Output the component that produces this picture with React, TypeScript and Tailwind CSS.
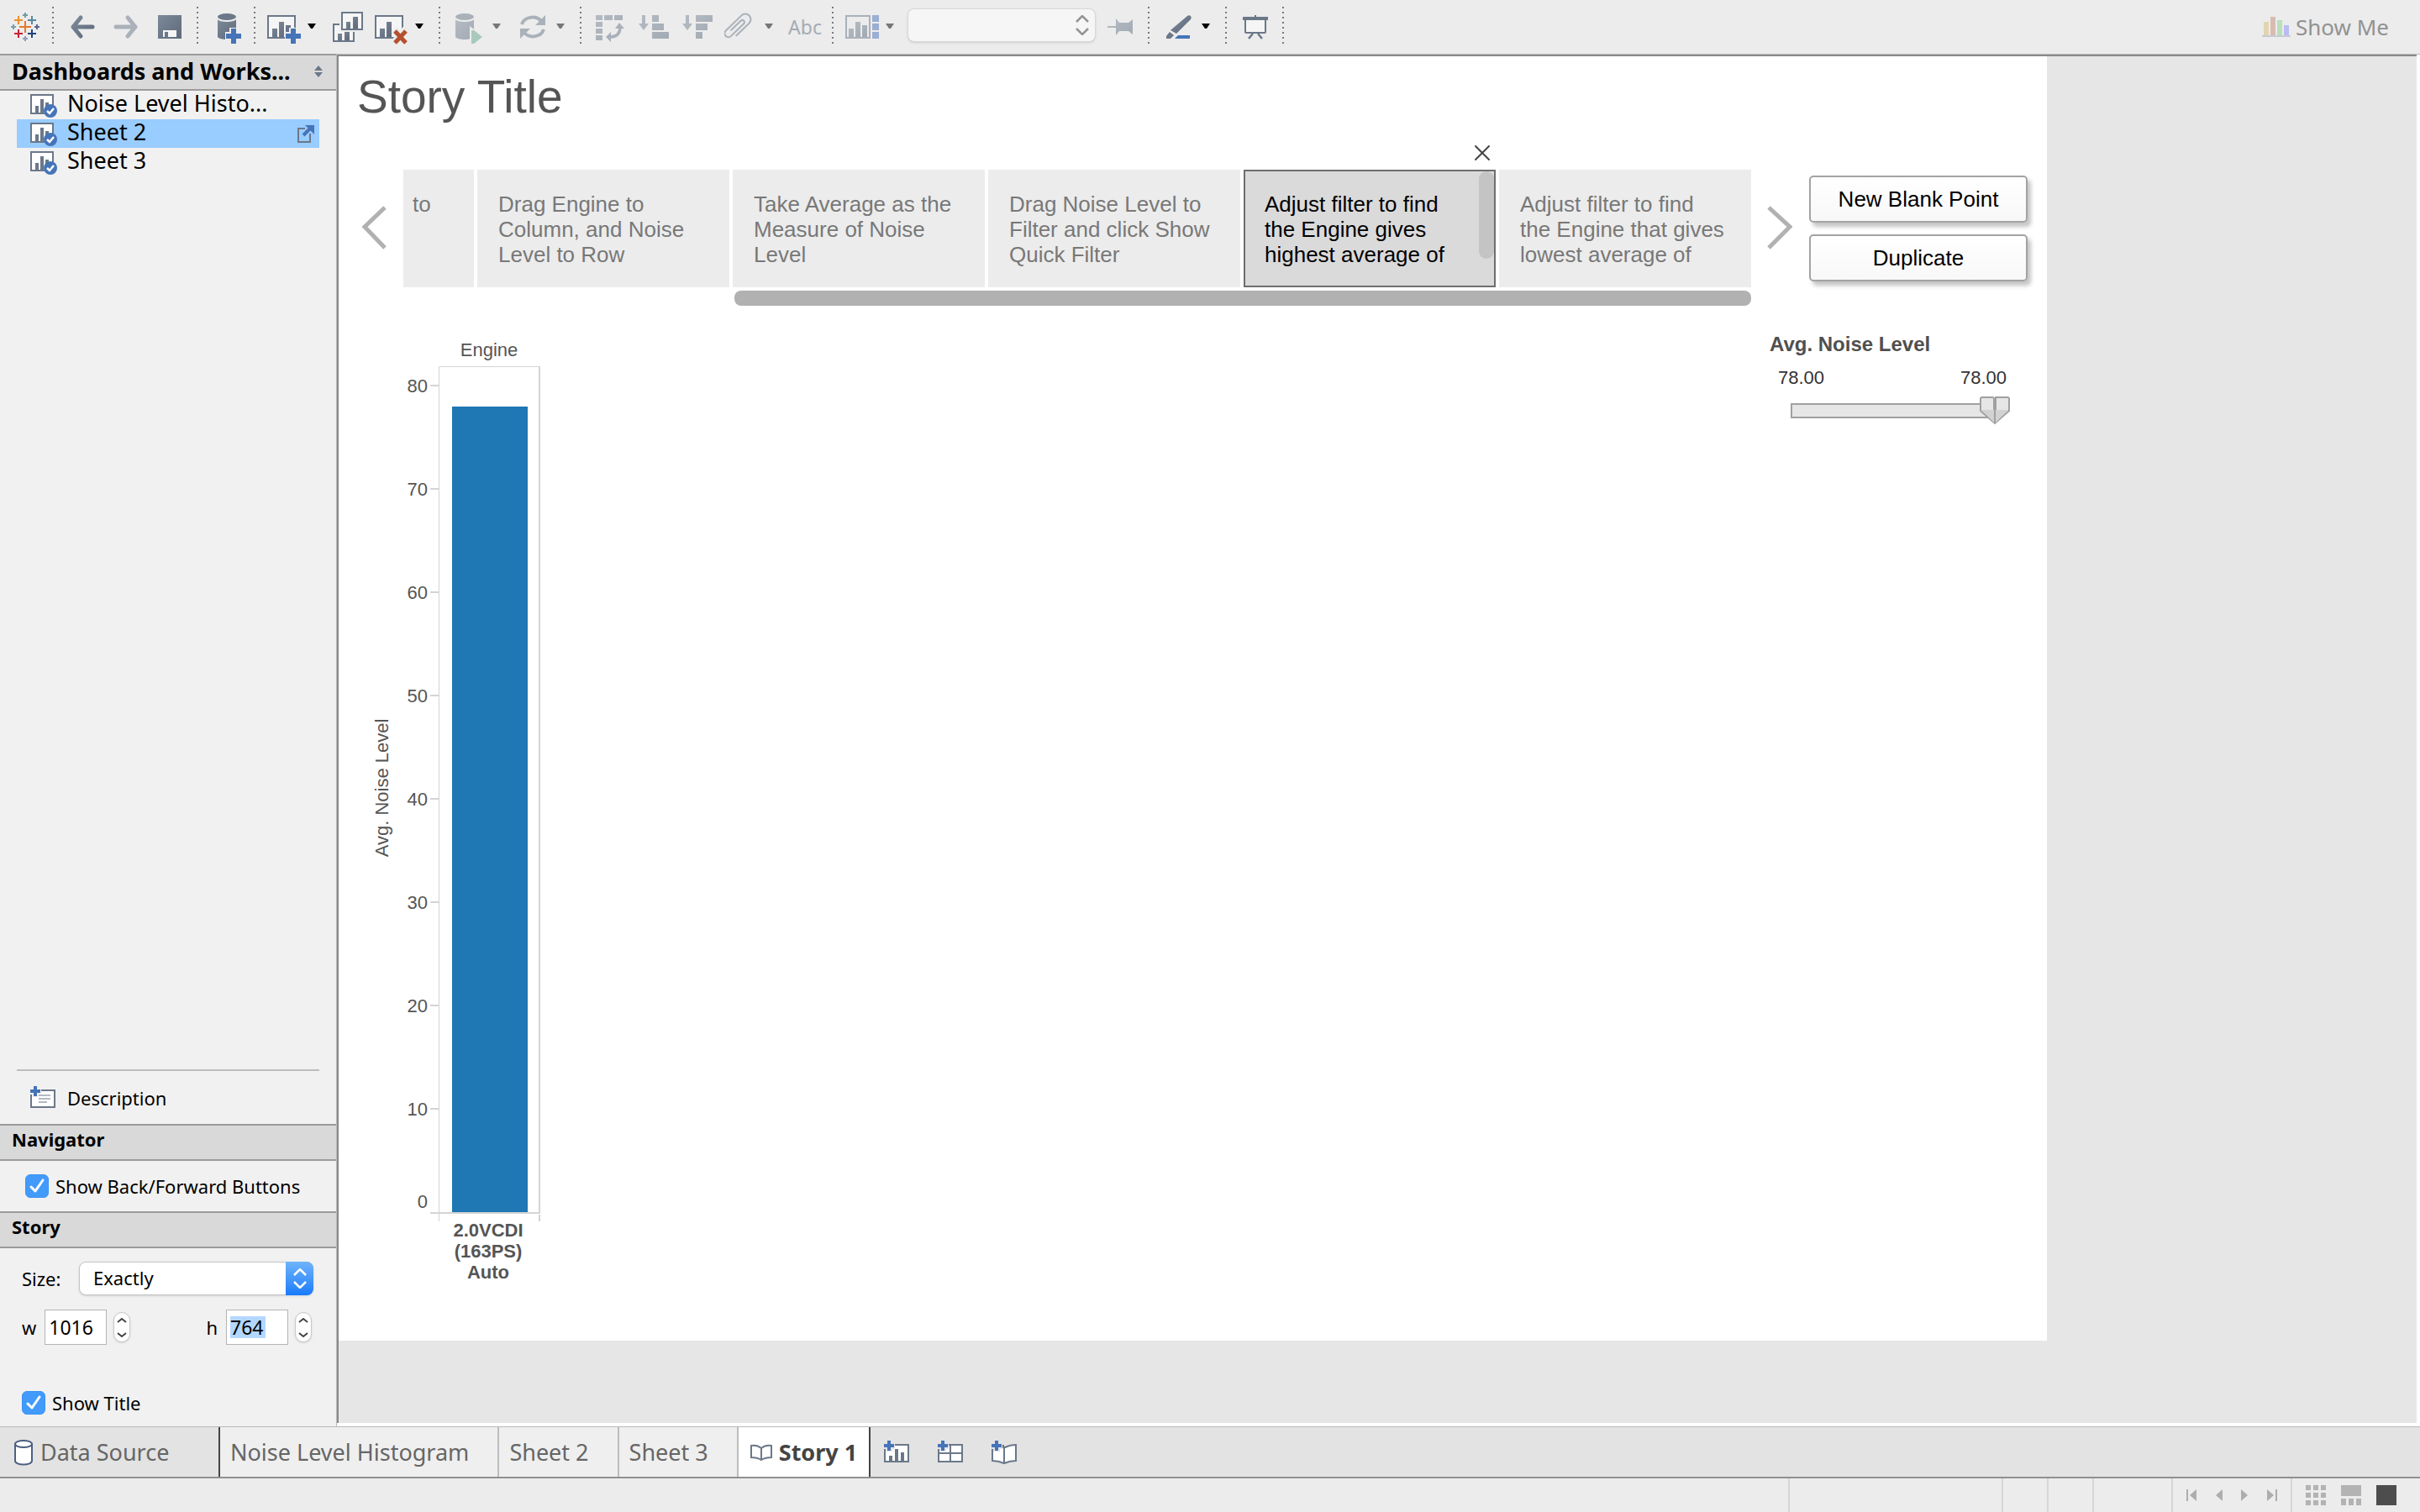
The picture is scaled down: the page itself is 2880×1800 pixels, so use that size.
import React, { useState } from "react";

const SLATE = "#6b7889";
const MUTED = "#aab1ba";
const BLUE = "#4674b8";

function Gradients() {
  return (
    <svg width="0" height="0" className="absolute" aria-hidden="true">
      <defs>
        <linearGradient id="slate" x1="0" y1="0" x2="1" y2="1">
          <stop offset="0" stopColor="#7d8a98" />
          <stop offset="1" stopColor="#5d697c" />
        </linearGradient>
        <linearGradient id="muted" x1="0" y1="0" x2="1" y2="1">
          <stop offset="0" stopColor="#b5bbc2" />
          <stop offset="1" stopColor="#a1aab4" />
        </linearGradient>
      </defs>
    </svg>
  );
}

type ToolProps = {
  label: string;
  w: number;
  className?: string;
  disabled?: boolean;
  children: React.ReactNode;
};

function Tool({ label, w, className = "", disabled, children }: ToolProps) {
  return (
    <button type="button" aria-label={label} disabled={disabled} className={`h-16 shrink-0 ${className}`}>
      <svg width={w} height="64" viewBox={`0 0 ${w} 64`} fill="none" className="block">
        {children}
      </svg>
    </button>
  );
}

function Caret({ label, className = "", muted }: { label: string; className?: string; muted?: boolean }) {
  return (
    <Tool label={label} w={10} className={className} disabled={muted}>
      <path d="M0 28H10L6 34H4Z" fill={muted ? "#777" : "#000"} />
    </Tool>
  );
}

function Sep({ className = "" }: { className?: string }) {
  return (
    <svg width="2" height="64" viewBox="0 0 2 64" className={`shrink-0 ${className}`} aria-hidden="true">
      <path d="M1 8V53" stroke="#7a7a7a" strokeWidth="2" strokeDasharray="2 4" />
    </svg>
  );
}

function Plus({ x, y, r, t, halo = "#ececec" }: { x: number; y: number; r: number; t: number; halo?: string }) {
  return (
    <g>
      <path d={`M${x - r - 1} ${y}H${x + r + 1}M${x} ${y - r - 1}V${y + r + 1}`} stroke={halo} strokeWidth={t + 4} />
      <path d={`M${x - r} ${y}H${x + r}M${x} ${y - r}V${y + r}`} stroke={BLUE} strokeWidth={t} />
    </g>
  );
}

function Logo() {
  const p = (x: number, y: number, r: number, c: string, w: number) => (
    <path d={`M${x - r} ${y}H${x + r}M${x} ${y - r}V${y + r}`} stroke={c} strokeWidth={w} />
  );
  return (
    <>
      {p(18, 32, 7, "#e8762c", 2)}
      {p(18, 18, 3, "#7199a6", 2)}
      {p(18, 46, 3, "#8f9bb8", 2)}
      {p(4, 32, 3, "#7aa0ab", 2)}
      {p(32, 32, 3, "#5c6692", 2)}
      {p(10, 24, 5, "#eb912c", 2)}
      {p(26, 24, 5, "#59879b", 2)}
      {p(10, 40, 5, "#c72035", 2)}
      {p(26, 40, 5, "#1f457e", 2)}
    </>
  );
}

function Toolbar() {
  return (
    <header className="flex h-16 items-center bg-[#ececec]">
      <Tool label="Start page" w={36} className="ml-3"><Logo /></Tool>
      <Sep className="ml-3.5" />
      <Tool label="Undo" w={32} className="ml-[19px]">
        <path d="M13 21L4 32L13 43M4 32H27" stroke="url(#slate)" strokeWidth="5" strokeLinecap="round" strokeLinejoin="round" />
      </Tool>
      <Tool label="Redo" w={32} className="ml-5" disabled>
        <path d="M17 21L26 32L17 43M26 32H3" stroke={MUTED} strokeWidth="5" strokeLinecap="round" strokeLinejoin="round" />
      </Tool>
      <Tool label="Save" w={28} className="ml-[21px]">
        <rect y="18" width="28" height="28" fill="url(#slate)" />
        <rect x="6" y="36" width="16" height="8" fill="#f4f4f4" />
        <rect x="8" y="38" width="4" height="6" fill={SLATE} />
      </Tool>
      <Sep className="ml-[18px]" />
      <Tool label="New data source" w={30} className="ml-[23px]">
        <path d="M0 23C2 27 20 27 22 23V44C20 48 2 48 0 44Z" fill="url(#slate)" />
        <ellipse cx="11" cy="20" rx="11" ry="4" fill={SLATE} />
        <Plus x={19} y={43} r={9} t={6} />
      </Tool>
      <Sep className="ml-[13px]" />
      <Tool label="New worksheet" w={40} className="ml-3.5">
        <rect x="1" y="19" width="32" height="26" fill="#f5f5f5" stroke={SLATE} strokeWidth="2" />
        <path d="M6 34h6v10H6zM14 26h6v18h-6zM22 30h6v14h-6z" fill="url(#slate)" />
        <Plus x={31} y={43} r={9} t={6} />
      </Tool>
      <Caret label="New worksheet options" className="ml-2" />
      <Tool label="Duplicate" w={36} className="ml-5">
        <rect x="1" y="29" width="24" height="20" fill="#f5f5f5" stroke={SLATE} strokeWidth="2" />
        <path d="M6 40h5v8H6zM14 38h6v10h-6z" fill="url(#slate)" />
        <rect x="8" y="13" width="28" height="25" fill="#ececec" />
        <rect x="11" y="15" width="24" height="20" fill="#f5f5f5" stroke={SLATE} strokeWidth="2" />
        <path d="M16 26h5v8h-5zM24 20h6v14h-6z" fill="url(#slate)" />
      </Tool>
      <Tool label="Clear sheet" w={40} className="ml-3.5">
        <rect x="1" y="19" width="32" height="26" fill="#f5f5f5" stroke={SLATE} strokeWidth="2" />
        <path d="M6 34h6v10H6zM14 26h6v18h-6z" fill="url(#slate)" />
        <path d="M23 35L37 51M37 35L23 51" stroke="#ececec" strokeWidth="9" />
        <path d="M24 37L37 51M37 37L24 51" stroke="#b5502f" strokeWidth="5" />
      </Tool>
      <Caret label="Clear sheet options" className="ml-2" />
      <Sep className="ml-[18px]" />
      <Tool label="Run auto updates" w={32} className="ml-[18px]" disabled>
        <path d="M0 23C2 27 20 27 22 23V44C20 48 2 48 0 44Z" fill="url(#muted)" />
        <ellipse cx="11" cy="20" rx="11" ry="4" fill={MUTED} />
        <path d="M17 31L34 44L17 54Z" fill="#ececec" />
        <path d="M19 36H22L32 44L22 52H19Z" fill="#a9c9bd" />
      </Tool>
      <Caret label="Auto update options" className="ml-3" muted />
      <Tool label="Refresh" w={32} className="ml-[22px]" disabled>
        <g stroke={MUTED} strokeWidth="4">
          <path d="M3 29A13 11 0 0 1 26 25" />
          <path d="M29 35A13 11 0 0 1 6 39" />
        </g>
        <path d="M31 18V30H19Z M1 46V34H13Z" fill={MUTED} />
      </Tool>
      <Caret label="Refresh options" className="ml-3" muted />
      <Sep className="ml-[18px]" />
      <Tool label="Swap rows and columns" w={34} className="ml-[17px]" disabled>
        <path d="M0 18h8v6H0zM10 18h10v6H10zM22 18h10v6H22zM0 26h8v6H0zM0 34h8v6H0zM0 42h8v6H0z" fill="url(#muted)" />
        <path d="M29 32C29 40 25 44 17 44" stroke={MUTED} strokeWidth="3.5" />
        <path d="M28 27L34 34H23ZM12 44L18 38V50Z" fill={MUTED} />
      </Tool>
      <Tool label="Sort ascending" w={36} className="ml-[17px]" disabled>
        <path d="M4 18h4v10h4L6 36L0 28h4zM16 18h8v8h-8zM16 28h14v8H16zM16 38h20v8H16z" fill="url(#muted)" />
      </Tool>
      <Tool label="Sort descending" w={36} className="ml-4" disabled>
        <path d="M4 18h4v10h4L6 36L0 28h4zM16 18h20v8H16zM16 28h14v8H16zM16 38h8v8h-8z" fill="url(#muted)" />
      </Tool>
      <Tool label="Group members" w={34} className="ml-3.5" disabled>
        <path
          transform="translate(16 31) rotate(46)"
          d="M7 9V-12a6.500 6.500 0 0 0-13 0V14a4.500 4.500 0 0 0 9 0V-7a2.500 2.500 0 0 0-5 0V9"
          stroke={MUTED}
          strokeWidth="2"
          strokeLinecap="round"
        />
      </Tool>
      <Caret label="Group options" className="ml-3.5" muted />
      <button type="button" disabled className="ml-[18px] w-10 shrink-0 text-center text-[23px] leading-8 text-[#a4abb4]">Abc</button>
      <Sep className="ml-3" />
      <Tool label="Show cards" w={40} className="ml-3.5" disabled>
        <rect x="1" y="19" width="28" height="26" stroke={MUTED} strokeWidth="2" />
        <path d="M4 34h6v10H4zM12 26h6v18h-6zM20 30h6v14h-6z" fill="url(#muted)" />
        <path d="M32 18h8v8h-8zM32 28h8v8h-8zM32 38h8v8h-8z" fill="#9bafd3" />
      </Tool>
      <Caret label="Card options" className="ml-2" muted />
      <div className="relative ml-4 w-56 shrink-0 pb-1">
        <select aria-label="Fit" disabled className="block h-10 w-full appearance-none rounded-lg border border-[#d8d8d8] bg-[#f6f6f6] shadow-sm">
          <option></option>
        </select>
        <svg width="16" height="24" viewBox="0 0 16 24" fill="none" className="pointer-events-none absolute top-2 right-2">
          <path d="M1 8L8 1L15 8M1 16L8 23L15 16" stroke="#949494" strokeWidth="2.500" />
        </svg>
      </div>
      <Tool label="Fix axes" w={30} className="ml-3.5" disabled>
        <path d="M0 31H10V22L14 27H25L30 23V41L25 37H14L10 42V33H0Z" fill="url(#muted)" />
      </Tool>
      <Sep className="ml-[18px]" />
      <Tool label="Highlight" w={30} className="ml-5">
        <path d="M25 19C28 17 31 20 29 23L12 40L5 36Z" fill="url(#slate)" />
        <path d="M4 38L9 42L5 46H0V43Z" fill={SLATE} />
        <path d="M14 42H28V46H10Z" fill={BLUE} />
      </Tool>
      <Caret label="Highlight options" className="ml-3" />
      <Sep className="ml-[18px]" />
      <Tool label="Presentation mode" w={30} className="ml-[19px]">
        <rect x="3" y="23" width="24" height="16" rx="1" fill="#f5f5f5" stroke={SLATE} strokeWidth="2" />
        <path d="M0 20H30V24H0ZM14 18h2v3h-2z" fill={SLATE} />
        <path d="M12 40L7 46M18 40L23 46" stroke={SLATE} strokeWidth="2.500" />
      </Tool>
      <Sep className="ml-[17px]" />
      <button type="button" disabled className="mr-[37px] ml-auto flex items-center gap-1.5 text-[26px] leading-8 text-[#929292]">
        <svg width="34" height="64" viewBox="0 0 34 64" aria-hidden="true">
          <path d="M2 26h6v16H2z" fill="#e2d5b0" />
          <path d="M10 20h6v22h-6z" fill="#d9bcb1" />
          <path d="M18 24h6v18h-6z" fill="#b8e0ba" />
          <path d="M26 30h6v12h-6z" fill="#b9bdf2" />
          <path d="M0 42h34v2H0z" fill="#c6cad2" />
        </svg>
        Show Me
      </button>
    </header>
  );
}

function SectionHeader({ children, large }: { children: React.ReactNode; large?: boolean }) {
  return (
    <h2
      className={`flex h-11 items-center justify-between border-y-2 border-[#9b9b9b] bg-[#d9d9d9] pl-3.5 font-bold text-black ${
        large ? "pb-0.5 text-[27px] leading-8" : "pb-2 text-[22px] leading-8"
      }`}
    >
      {children}
    </h2>
  );
}

function SheetIcon() {
  return (
    <svg width="34" height="34" viewBox="0 0 34 34" className="shrink-0" aria-hidden="true">
      <rect x="1" y="5" width="26" height="22" fill="#fff" stroke={SLATE} strokeWidth="2" />
      <path d="M6 18h4v9H6zM12 10h4v17h-4zM18 14h4v6h-4z" fill={SLATE} />
      <circle cx="24" cy="24" r="8" fill={BLUE} />
      <path d="M20 24L23 27L28 21" stroke="#fff" strokeWidth="2.500" fill="none" />
    </svg>
  );
}

function SheetList() {
  const sheets = ["Noise Level Histo...", "Sheet 2", "Sheet 3"];
  return (
    <ul className="px-5">
      {sheets.map((name, i) => (
        <li key={name} className={`flex h-[34px] items-center ${i === 1 ? "bg-[#99ccff]" : ""}`}>
          <button type="button" className="flex flex-1 items-center gap-2.5 pl-4 text-[27px] leading-[30px] text-black">
            <SheetIcon />
            <span className="pb-1">{name}</span>
          </button>
          {i === 1 && (
            <a href="#sheet-2" aria-label="Go to Sheet 2" className="mr-1.5">
              <svg width="20" height="24" viewBox="0 0 20 24" fill="none">
                <path d="M9 6H1V22H15V12" stroke={SLATE} strokeWidth="2" />
                <path d="M7 14L16 5" stroke={BLUE} strokeWidth="4" />
                <path d="M9 2H20V13Z" fill={BLUE} />
              </svg>
            </a>
          )}
        </li>
      ))}
    </ul>
  );
}

function Check({ label, className = "" }: { label: string; className?: string }) {
  const [on, setOn] = useState(true);
  return (
    <label className={`flex items-center gap-2 text-[22px] leading-7 text-black ${className}`}>
      <span className="relative block size-7 shrink-0">
        <input
          type="checkbox"
          checked={on}
          onChange={() => setOn(!on)}
          className="block size-7 appearance-none rounded-md border border-[#b5b5b5] bg-white checked:border-[#3a92f5] checked:bg-[#429bfa]"
        />
        {on && (
          <svg width="28" height="28" viewBox="0 0 28 28" fill="none" className="pointer-events-none absolute inset-0">
            <path d="M7 15L12 20L21 7" stroke="#fff" strokeWidth="3" strokeLinecap="round" strokeLinejoin="round" />
          </svg>
        )}
      </span>
      {label}
    </label>
  );
}

function NumberField({ id, label, value, selected }: { id: string; label: string; value: string; selected?: boolean }) {
  return (
    <div className="flex items-center">
      <label htmlFor={id} className="mr-2.5 text-[22px] leading-7 text-black">{label}</label>
      <input
        id={id}
        type="text"
        defaultValue={value}
        className={`h-[42px] w-[74px] border border-[#b4b4b4] bg-white px-1 text-[23px] leading-7 text-black ${
          selected ? "bg-[linear-gradient(#b3d7ff,#b3d7ff)] bg-[length:42px_26px] bg-[position:4px_center] bg-no-repeat" : ""
        }`}
      />
      <span className="ml-2 flex h-9 w-5 flex-col rounded-full border border-[#c9c9c9] bg-white shadow-sm">
        <button type="button" aria-label={`Increase ${label}`} className="flex flex-1 items-center justify-center">
          <svg width="12" height="6" viewBox="0 0 12 6" fill="none"><path d="M1 5L6 1L11 5" stroke="#444" strokeWidth="2" /></svg>
        </button>
        <button type="button" aria-label={`Decrease ${label}`} className="flex flex-1 items-center justify-center">
          <svg width="12" height="6" viewBox="0 0 12 6" fill="none"><path d="M1 1L6 5L11 1" stroke="#444" strokeWidth="2" /></svg>
        </button>
      </span>
    </div>
  );
}

function Sidebar() {
  return (
    <aside className="flex w-[400px] shrink-0 flex-col bg-[#f1f1f1]">
      <SectionHeader large>
        <span>Dashboards and Works...</span>
        <svg width="10" height="14" viewBox="0 0 10 14" className="mr-4" aria-hidden="true">
          <path d="M0 6L5 0L10 6ZM0 8L5 14L10 8Z" fill={SLATE} />
        </svg>
      </SectionHeader>
      <SheetList />
      <div className="mx-5 mt-auto border-t-2 border-[#bdbdbd]" />
      <button type="button" className="flex h-[63px] items-center gap-3.5 pl-9 text-[22px] leading-8 text-black">
        <svg width="30" height="28" viewBox="0 0 30 28" fill="none" aria-hidden="true">
          <rect x="1" y="5" width="28" height="20" fill="#fff" stroke={SLATE} strokeWidth="2" />
          <path d="M10 11H24M10 15H24M10 19H20" stroke="#b4b9c2" strokeWidth="2" />
          <Plus x={6} y={6} r={6} t={4} halo="#f1f1f1" />
        </svg>
        Description
      </button>
      <SectionHeader>Navigator</SectionHeader>
      <div className="flex h-[60px] items-center pl-[30px]">
        <Check label="Show Back/Forward Buttons" />
      </div>
      <SectionHeader>Story</SectionHeader>
      <div className="pt-4 pr-[27px] pb-[14px] pl-[26px]">
        <div className="flex items-center justify-between">
          <label htmlFor="size" className="text-[22px] leading-8 text-black">Size:</label>
          <div className="relative w-[279px]">
            <select id="size" defaultValue="Exactly" className="block h-10 w-full appearance-none rounded-lg border border-[#c4c4c4] bg-white pb-0.5 pl-4 text-[22px] text-black shadow-sm">
              <option>Exactly</option>
              <option>Automatic</option>
              <option>Range</option>
            </select>
            <span className="pointer-events-none absolute inset-y-0 right-0 flex w-[33px] items-center justify-center rounded-r-lg bg-linear-to-b from-[#6db3f9] to-[#147bfc]">
              <svg width="16" height="24" viewBox="0 0 16 24" fill="none">
                <path d="M1 8L8 1L15 8M1 16L8 23L15 16" stroke="#fff" strokeWidth="2.500" />
              </svg>
            </span>
          </div>
        </div>
        <div className="mt-[17px] flex items-center justify-between pr-0.5">
          <NumberField id="width" label="w" value="1016" />
          <NumberField id="height" label="h" value="764" selected />
        </div>
        <Check label="Show Title" className="mt-[55px]" />
      </div>
    </aside>
  );
}

const points = [
  "Drag Engine to Column, and Noise Level to Row",
  "Take Average as the Measure of Noise Level",
  "Drag Noise Level to Filter and click Show Quick Filter",
  "Adjust filter to find the Engine gives highest average of",
  "Adjust filter to find the Engine that gives lowest average of",
];

function StoryNavigator() {
  return (
    <nav className="flex items-start pr-[23px] pl-[27px]" aria-label="Story points">
      <button type="button" aria-label="Previous point" className="mt-[65px] shrink-0">
        <svg width="30" height="70" viewBox="0 0 30 70" fill="none">
          <path d="M28 12L4 35L28 60" stroke="#b1b1b1" strokeWidth="5" />
        </svg>
      </button>
      <div className="ml-5 min-w-0 flex-1">
        <div className="flex h-[172px] items-end gap-1 overflow-hidden">
          <button type="button" className="flex h-[140px] w-[84px] shrink-0 bg-[#ececec] pt-[26px] pl-[11px] text-left text-[26px] leading-[30px] text-[#787878]">to</button>
          {points.map((text, i) => {
            const active = i === 3;
            return (
              <div key={i} className="relative h-[140px] w-[300px] shrink-0">
                <button
                  type="button"
                  className={`flex size-full overflow-hidden border-2 pt-6 pr-7 pl-[23px] text-left text-[26px] leading-[30px] ${
                    active ? "border-[#6e6e6e] bg-[#dadada] text-black" : "border-[#ececec] bg-[#ececec] text-[#787878]"
                  }`}
                >
                  {text}
                </button>
                {active && (
                  <>
                    <span className="absolute top-0.5 right-0.5 h-26 w-[18px] rounded-full bg-[#c4c4c4]" />
                    <button type="button" aria-label="Delete point" className="absolute -top-[30px] right-1.5">
                      <svg width="20" height="20" viewBox="0 0 20 20" fill="none" className="block">
                        <path d="M2 2L18 18M18 2L2 18" stroke="#444" strokeWidth="2" strokeLinecap="round" />
                      </svg>
                    </button>
                  </>
                )}
              </div>
            );
          })}
        </div>
        <div className="mt-1 flex justify-end">
          <div className="h-[18px] w-[1210px] rounded-lg bg-[#b1b1b1]" />
        </div>
      </div>
      <button type="button" aria-label="Next point" className="mt-[65px] ml-[19px] shrink-0">
        <svg width="30" height="70" viewBox="0 0 30 70" fill="none">
          <path d="M2 12L27 35L2 60" stroke="#b1b1b1" strokeWidth="5" />
        </svg>
      </button>
      <div className="mt-[39px] ml-5 flex w-[260px] shrink-0 flex-col gap-3.5">
        {["New Blank Point", "Duplicate"].map((t) => (
          <button key={t} type="button" className="h-14 rounded-[5px] border-2 border-[#a3a3a3] bg-linear-to-b from-white to-[#f8f8f8] text-[26px] leading-8 text-black shadow-[4px_5px_5px_#c4c4c4]">
            {t}
          </button>
        ))}
      </div>
    </nav>
  );
}

function Chart() {
  const y = (v: number) => Math.round(1043 - v * 12.3);
  const ticks = [80, 70, 60, 50, 40, 30, 20, 10];
  return (
    <svg width="222" height="1140" viewBox="0 0 222 1140" fontFamily="Liberation Sans, Arial, sans-serif" fontSize="22" fill="#555" role="img" aria-label="Avg. Noise Level by Engine">
      <text x="159" y="24" textAnchor="middle">Engine</text>
      <g stroke="#d4d4d4" fill="none">
        <path d="M99.500 1054V36.500H218" strokeWidth="1" />
        <path d="M219 36V1043" strokeWidth="2" />
        <path d="M219 1046V1054" strokeWidth="2" />
        <path d="M89 1044H220" strokeWidth="2" />
        {ticks.map((t) => (
          <path key={t} d={`M89 ${y(t)}H99`} strokeWidth="2" />
        ))}
      </g>
      {ticks.map((t) => (
        <text key={t} x="86" y={y(t) + 8} textAnchor="end">{t}</text>
      ))}
      <text x="86" y="1038" textAnchor="end">0</text>
      <rect x="115" y={y(78)} width="90" height={1043 - y(78)} fill="#1f77b4" />
      <text transform="translate(39 538) rotate(-90)" textAnchor="middle">Avg. Noise Level</text>
      <g textAnchor="middle" fontWeight="bold">
        <text x="158" y="1072">2.0VCDI</text>
        <text x="158" y="1097">(163PS)</text>
        <text x="158" y="1122">Auto</text>
      </g>
    </svg>
  );
}

function RangeFilter() {
  return (
    <fieldset className="w-[308px] shrink-0 pr-5">
      <legend className="text-2xl leading-8 font-bold text-[#4f4f4f]">Avg. Noise Level</legend>
      <div className="mt-2 flex justify-between pr-1.5 pl-2.5 text-[22px] leading-8 text-[#333]">
        <span>78.00</span>
        <span>78.00</span>
      </div>
      <div className="relative mt-1.5 ml-[25px] h-9">
        <svg width="262" height="36" viewBox="0 0 262 36" fill="none" aria-hidden="true">
          <rect x="1" y="9" width="238" height="16" fill="#e6e6e6" stroke="#a0a0a0" strokeWidth="2" />
          <path d="M227 1H240Q242 1 242 3V31L226 17V3Q226 1 228 1Z" fill="#e6e6e6" stroke="#a0a0a0" strokeWidth="2" />
          <path d="M244 1H258Q260 1 260 3V17L244 31Z" fill="#e6e6e6" stroke="#a0a0a0" strokeWidth="2" />
          <path d="M227 16H242V31ZM244 16H259L244 31Z" fill="#d2d2d2" />
        </svg>
        <input type="range" aria-label="Minimum noise level" min={60} max={78} defaultValue={78} className="absolute inset-y-0 left-0 w-1/2 opacity-0" />
        <input type="range" aria-label="Maximum noise level" min={60} max={78} defaultValue={78} className="absolute inset-y-0 right-0 w-1/2 opacity-0" />
      </div>
    </fieldset>
  );
}

function Story() {
  return (
    <main className="flex flex-1 border-t border-l border-[#b9b9b9] bg-white pr-1 pb-1">
      <div className="flex-1 border-t-2 border-l-2 border-[#8a8a8a] bg-[#e6e6e6]">
        <div className="flex w-full max-w-[2033px] flex-col bg-white pb-14 font-['Liberation_Sans',Arial,sans-serif]">
          <h1 className="pt-4 pl-[22px] text-[55px] leading-[64px] text-[#555]">Story Title</h1>
          <div className="mt-[23px]">
            <StoryNavigator />
          </div>
          <div className="mt-9 flex items-start justify-between pl-5">
            <Chart />
            <div className="-mt-1.5 pr-[22px]">
              <RangeFilter />
            </div>
          </div>
        </div>
      </div>
    </main>
  );
}

function SheetTabs() {
  const tabs = ["Noise Level Histogram", "Sheet 2", "Sheet 3"];
  return (
    <nav className="flex h-[62px] items-stretch border-t border-b-2 border-t-[#b9b9b9] border-b-[#909090] bg-[#e3e3e3] text-[27px] leading-8 text-[#666]" aria-label="Sheets">
      <button type="button" className="flex w-[262px] items-center gap-2 border-r-2 border-[#444] pl-4">
        <svg width="24" height="32" viewBox="0 0 24 32" fill="#fff" stroke="#4c6080" strokeWidth="2" aria-hidden="true">
          <path d="M2 5V26C2 32 22 32 22 26V5" />
          <ellipse cx="12" cy="6" rx="10" ry="4" />
        </svg>
        Data Source
      </button>
      {tabs.map((t) => (
        <button key={t} type="button" className="border-r-2 border-[#bdbdbd] bg-[#efefef] pr-[34px] pl-3">{t}</button>
      ))}
      <button type="button" className="flex items-center gap-2 border-r-2 border-[#444] bg-white pr-3.5 pl-3.5 font-bold text-[#444]">
        <svg width="26" height="22" viewBox="0 0 26 22" fill="none" stroke={SLATE} strokeWidth="2" aria-hidden="true">
          <path d="M13 20Q8 17 1 17V3Q8 2 13 6Q18 2 25 3V17Q18 17 13 20ZM13 6V19" />
        </svg>
        Story 1
      </button>
      <div className="ml-4 flex items-center gap-[34px]">
        <button type="button" aria-label="New worksheet">
          <svg width="30" height="28" viewBox="0 0 30 28" fill="none">
            <rect x="1" y="5" width="28" height="20" fill="#fff" stroke={SLATE} strokeWidth="2" />
            <path d="M6 18h4v7H6zM13 10h4v15h-4zM20 14h4v11h-4z" fill={SLATE} />
            <Plus x={6} y={6} r={6} t={4} halo="#e3e3e3" />
          </svg>
        </button>
        <button type="button" aria-label="New dashboard">
          <svg width="30" height="28" viewBox="0 0 30 28" fill="none">
            <rect x="1" y="5" width="28" height="20" fill="#fff" stroke={SLATE} strokeWidth="2" />
            <path d="M15 5V25M1 15H29" stroke={SLATE} strokeWidth="2" />
            <Plus x={6} y={6} r={6} t={4} halo="#e3e3e3" />
          </svg>
        </button>
        <button type="button" aria-label="New story">
          <svg width="30" height="28" viewBox="0 0 30 28" fill="none">
            <path d="M1 6H14V8L16 8Q22 5 29 5V24Q22 24 15 27Q8 24 1 24ZM15 8V26" fill="#fff" stroke={SLATE} strokeWidth="2" />
            <Plus x={6} y={6} r={6} t={4} halo="#e3e3e3" />
          </svg>
        </button>
      </div>
    </nav>
  );
}

function StatusBar() {
  return (
    <footer className="flex h-10 items-stretch justify-end bg-[#ececec]">
      <div className="w-[254px] border-l-2 border-[#d6d6d6]" />
      <div className="w-[54px] border-l-2 border-[#d6d6d6]" />
      <div className="w-[54px] border-l-2 border-[#d6d6d6]" />
      <div className="w-[94px] border-l-2 border-[#d6d6d6]" />
      <div className="flex w-[142px] items-center justify-between border-l-2 border-[#d6d6d6] pr-4 pl-4">
        <button type="button" aria-label="First sheet"><svg width="12" height="14" viewBox="0 0 12 14" fill="#adadad"><path d="M0 0h2v14H0zM12 0V14L4 7Z" /></svg></button>
        <button type="button" aria-label="Previous sheet"><svg width="8" height="14" viewBox="0 0 8 14" fill="#adadad"><path d="M8 0V14L0 7Z" /></svg></button>
        <button type="button" aria-label="Next sheet"><svg width="8" height="14" viewBox="0 0 8 14" fill="#adadad"><path d="M0 0V14L8 7Z" /></svg></button>
        <button type="button" aria-label="Last sheet"><svg width="12" height="14" viewBox="0 0 12 14" fill="#adadad"><path d="M10 0h2v14h-2zM0 0V14L8 7Z" /></svg></button>
      </div>
      <div className="flex w-[154px] items-center gap-[18px] border-l-2 border-[#d6d6d6] pl-4">
        <button type="button" aria-label="Sheet sorter">
          <svg width="24" height="24" viewBox="0 0 24 24" fill="#b3b3b3"><path d="M0 0h6v6H0zM9 0h6v6H9zM18 0h6v6h-6zM0 9h6v6H0zM9 9h6v6H9zM18 9h6v6h-6zM0 18h6v6H0zM9 18h6v6H9zM18 18h6v6h-6z" /></svg>
        </button>
        <button type="button" aria-label="Filmstrip">
          <svg width="24" height="24" viewBox="0 0 24 24" fill="#b3b3b3"><path d="M0 0h24v13H0zM0 16h6v8H0zM9 16h6v8H9zM18 16h6v8h-6z" /></svg>
        </button>
        <button type="button" aria-label="Show tabs">
          <svg width="24" height="24" viewBox="0 0 24 24" fill="#4d4d4d"><path d="M0 0h24v24H0z" /></svg>
        </button>
      </div>
    </footer>
  );
}

export default function App() {
  return (
    <div className="flex min-h-screen flex-col bg-[#ececec] font-['Noto_Sans','Open_Sans',sans-serif]">
      <Gradients />
      <Toolbar />
      <div className="flex flex-1">
        <Sidebar />
        <Story />
      </div>
      <SheetTabs />
      <StatusBar />
    </div>
  );
}
